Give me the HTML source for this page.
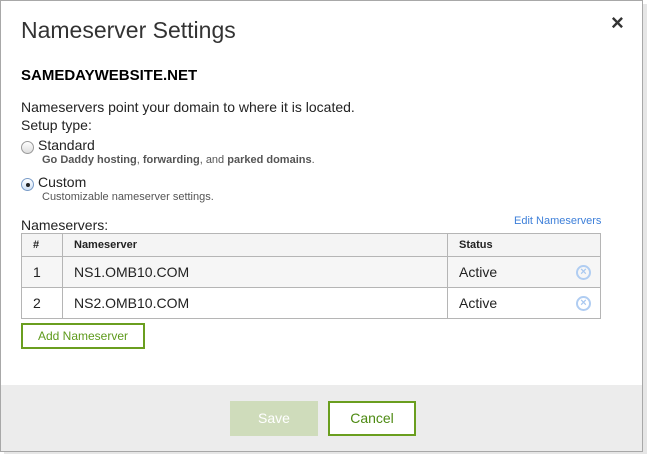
<!DOCTYPE html>
<html><head><style>
*{box-sizing:border-box;margin:0;padding:0}
body{width:649px;height:454px;background:#fff;font-family:"Liberation Sans",Arial,sans-serif;position:relative;overflow:hidden;color:#222}
.shadow{position:absolute;left:4px;top:4px;width:643px;height:450px;background:#e6e6e6}
.dlg{position:absolute;left:0;top:0;width:643px;height:452px;border:1px solid #a8a8a8;background:#fff;overflow:hidden}
.abs{position:absolute;white-space:nowrap}
.footer{position:absolute;left:0;top:384px;width:641px;height:67px;background:#ececec}
table{position:absolute;left:20px;top:232px;width:580px;border-collapse:collapse}
td,th{border:1px solid #b5b5b5;text-align:left;padding-left:11px;font-size:14px}
th{height:23px;background:#f4f4f4;font-size:11px;font-weight:bold}
td{height:31px;background:#f6f6f6}
tr.r2 td{background:#fff}
.x{position:absolute;right:9px;top:8px;width:15px;height:15px;border:2px solid #b0cdf2;border-radius:50%;color:#a9c8f0;font-size:11px;line-height:11px;text-align:center;font-weight:bold}
.radio{position:absolute;width:13px;height:13px;border:1px solid #9a9a9a;border-radius:50%;background:linear-gradient(#fff,#ddd)}
</style></head><body>
<div class="shadow"></div>
<div class="dlg">
<div class="abs" style="left:20px;top:16px;font-size:23px;color:#333">Nameserver Settings</div>
<div class="abs" style="left:610px;top:9px;font-size:22px;color:#333;font-weight:bold">×</div>
<div class="abs" style="left:20px;top:66px;font-size:15px;font-weight:bold;color:#000">SAMEDAYWEBSITE.NET</div>
<div class="abs" style="left:20px;top:98px;font-size:14px">Nameservers point your domain to where it is located.</div>
<div class="abs" style="left:20px;top:116px;font-size:14px">Setup type:</div>
<div class="radio" style="left:20px;top:140px"></div>
<div class="abs" style="left:37px;top:136px;font-size:14px">Standard</div>
<div class="abs" style="left:41px;top:153px;font-size:11px;color:#555"><b>Go Daddy hosting</b>, <b>forwarding</b>, and <b>parked domains</b>.</div>
<div class="radio" style="left:20px;top:177px;border-color:#7a9cc8;background:linear-gradient(#fff,#cfe0f5)"><div style="position:absolute;left:4px;top:4px;width:4px;height:4px;border-radius:50%;background:#222"></div></div>
<div class="abs" style="left:37px;top:173px;font-size:14px">Custom</div>
<div class="abs" style="left:41px;top:190px;font-size:11px;color:#555">Customizable nameserver settings.</div>
<div class="abs" style="left:20px;top:216px;font-size:14px">Nameservers:</div>
<div class="abs" style="left:513px;top:214px;font-size:11px;color:#3d7fd9">Edit Nameservers</div>
<table>
<tr><th style="width:41px">#</th><th style="width:385px">Nameserver</th><th>Status</th></tr>
<tr><td>1</td><td>NS1.OMB10.COM</td><td style="position:relative">Active<span class="x">×</span></td></tr>
<tr class="r2"><td>2</td><td>NS2.OMB10.COM</td><td style="position:relative">Active<span class="x">×</span></td></tr>
</table>
<div class="abs" style="left:20px;top:322px;width:124px;height:26px;border:2px solid #6a9e1f;font-size:12px;color:#5e9a1c;text-align:center;line-height:22px">Add Nameserver</div>
<div class="footer">
<div class="abs" style="left:229px;top:16px;width:88px;height:35px;background:#cfdcbb;color:#fff;font-size:14px;text-align:center;line-height:35px">Save</div>
<div class="abs" style="left:327px;top:16px;width:88px;height:35px;border:2px solid #6a9e1f;background:#fff;color:#4d8a12;font-size:14px;text-align:center;line-height:31px">Cancel</div>
</div>
</div>
</body></html>
